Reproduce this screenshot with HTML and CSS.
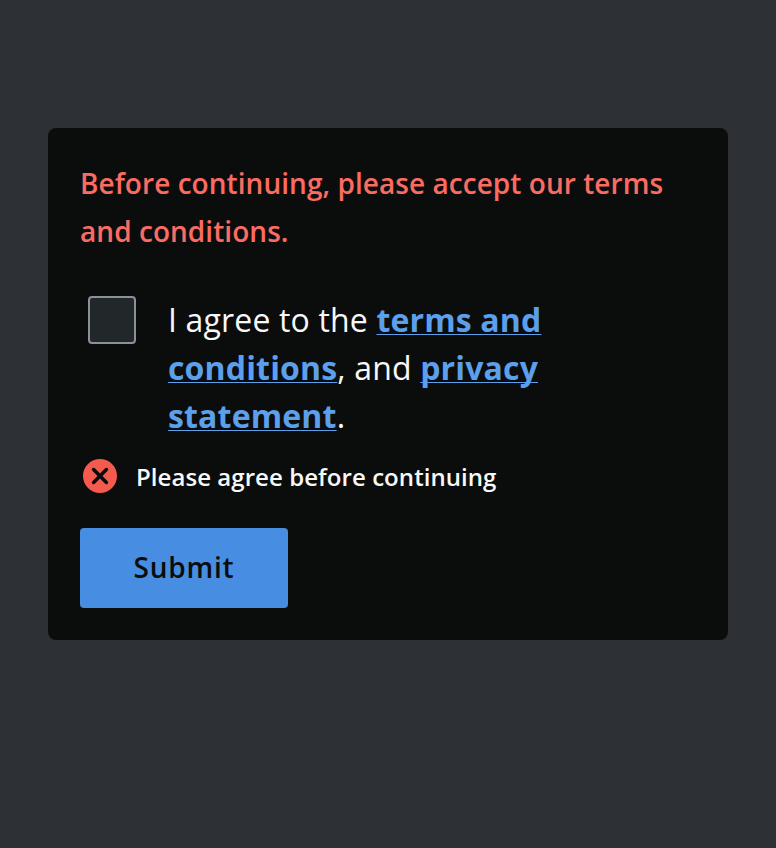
FILE: index.html
```html
<!DOCTYPE html>
<html lang="en">
<head>
<meta charset="utf-8">
<title>Terms and conditions</title>
<link rel="stylesheet" href="styles.css">
</head>
<body>
<form class="card">
  <p class="notice">Before continuing, please accept our terms and conditions.</p>
  <div class="agree">
    <span class="checkbox" role="checkbox" aria-checked="false"></span>
    <p class="agree-text">I agree to the <a href="#">terms and conditions</a>, and <a href="#">privacy statement</a>.</p>
  </div>
  <div class="error">
    <svg class="error-icon" viewBox="0 0 34 34" width="34" height="34"><circle cx="17" cy="17" r="17" fill="#f55a4e"/><path d="M10.6 10.6l12.8 12.8M23.4 10.6l-12.8 12.8" stroke="#0b0d0c" stroke-width="3.6" stroke-linecap="round"/></svg>
    <span>Please agree before continuing</span>
  </div>
  <button class="submit" type="button">Submit</button>
</form>
</body>
</html>
```

FILE: styles.css
```css
* { box-sizing: border-box; }
body {
  margin: 0;
  min-height: 848px;
  padding: 128px 48px 0;
  background: #2d3035;
  font-family: "Open Sans", sans-serif;
  color: #f8f8f8;
}
.card {
  height: 512px;
  padding: 31px 32px 32px;
  border-radius: 8px;
  background: #0b0d0c;
}
.notice {
  margin: 0;
  font-size: 28px;
  line-height: 48px;
  font-weight: 600;
  letter-spacing: 0.05px;
  color: #fa6c62;
}
.agree {
  display: flex;
  gap: 32px;
  margin-top: 41px;
  padding-left: 8px;
}
.checkbox {
  flex: none;
  width: 48px;
  height: 48px;
  border: 2px solid #8c909a;
  border-radius: 4px;
  background: #22272a;
}
.agree-text {
  width: 400px;
  margin: 0;
  font-size: 32px;
  line-height: 48px;
  letter-spacing: 0.16px;
}
.agree-text a {
  color: #5c9fea;
  font-weight: 700;
  text-decoration: underline;
  text-decoration-thickness: 1px;
  text-decoration-skip-ink: none;
  text-underline-offset: 2px;
}
.error {
  display: flex;
  align-items: center;
  gap: 19px;
  height: 40px;
  margin-top: 16px;
  padding-left: 3px;
  font-size: 24px;
  font-weight: 600;
  letter-spacing: 0.06px;
}
.submit {
  display: block;
  width: 208px;
  height: 80px;
  margin-top: 32px;
  padding: 0 0 2px;
  border: 0;
  border-radius: 4px;
  background: #478ee3;
  color: #0b0d0c;
  font: 600 28px "Open Sans", sans-serif;
  letter-spacing: 0.8px;
}
```
